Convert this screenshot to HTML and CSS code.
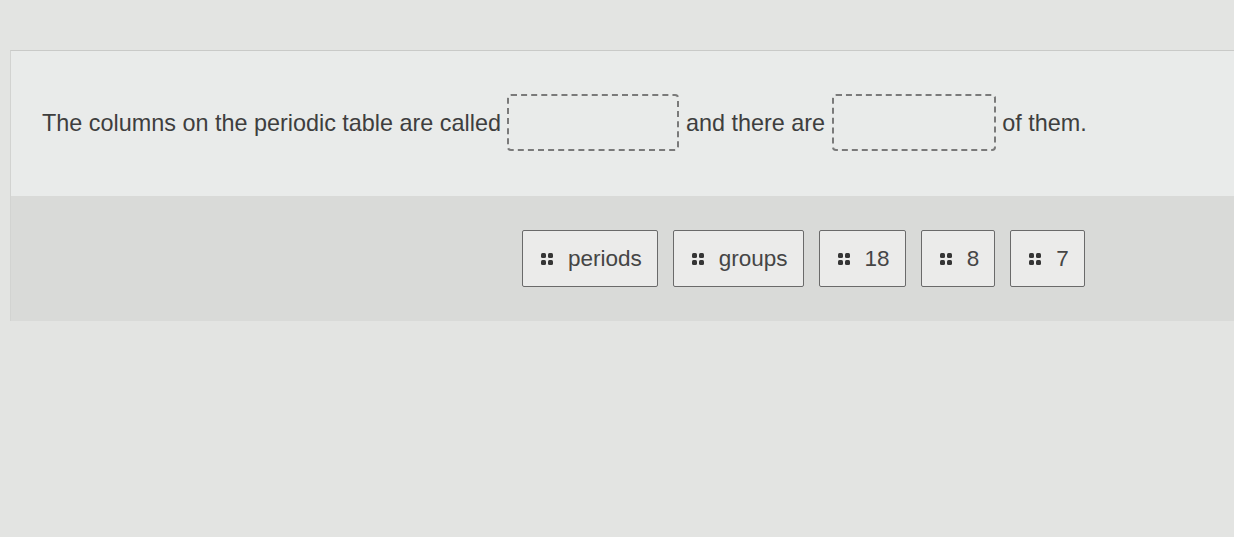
FILE: index.html
```html
<!DOCTYPE html>
<html lang="en">
<head>
    <meta charset="UTF-8">
    <title>Drag and drop question</title>
    <link rel="stylesheet" href="styles.css">
</head>
<body>
    <div class="page">
        <div class="question">
            <div class="question_text">
                The columns on the periodic table are called
                <span class="drop_box"></span>
                and there are
                <span class="drop_box drop_box_b"></span>
                of them.
            </div>
            <div class="choices">
                <div class="chip"><span class="handle"><i></i><i></i><i></i><i></i></span>periods</div>
                <div class="chip"><span class="handle"><i></i><i></i><i></i><i></i></span>groups</div>
                <div class="chip"><span class="handle"><i></i><i></i><i></i><i></i></span>18</div>
                <div class="chip"><span class="handle"><i></i><i></i><i></i><i></i></span>8</div>
                <div class="chip"><span class="handle"><i></i><i></i><i></i><i></i></span>7</div>
            </div>
        </div>
    </div>
</body>
</html>
```

FILE: styles.css
```css
html, body {
    margin: 0;
    height: 100%;
}
body {
    background-color: #e3e4e2;
    font-family: "Liberation Sans", Arial, sans-serif;
    color: #3e3e3e;
    overflow: hidden;
}
.page {
    padding: 50px 0 0 10px;
}
.question {
    background-color: #e9ebea;
    border-top: 1px solid #c9cac8;
    border-left: 1px solid #d2d3d1;
}
.question_text {
    font-size: 23.4px;
    padding: 44px 0 44px 31px;
    line-height: 57px;
    height: 57px;
    white-space: nowrap;
}
.drop_box {
    display: inline-block;
    width: 168px;
    height: 53px;
    border: 2px dashed #7a7a7a;
    border-radius: 4px;
    vertical-align: middle;
    margin-top: -4px;
}
.drop_box_b {
    width: 160px;
}
.choices {
    background-color: #d9dad8;
    height: 125px;
    display: flex;
    align-items: center;
    gap: 15px;
    padding-left: 511px;
    box-sizing: border-box;
}
.chip {
    display: flex;
    align-items: center;
    gap: 15px;
    height: 57px;
    box-sizing: border-box;
    padding: 0 15px 0 18px;
    background-color: #ebebea;
    border: 1px solid #6a6a6a;
    border-radius: 2px;
    font-size: 22.5px;
    color: #454545;
}
.handle {
    display: grid;
    grid-template-columns: 5px 5px;
    gap: 2px;
}
.handle i {
    width: 5px;
    height: 5px;
    border-radius: 1.5px;
    background-color: #353535;
}
```
